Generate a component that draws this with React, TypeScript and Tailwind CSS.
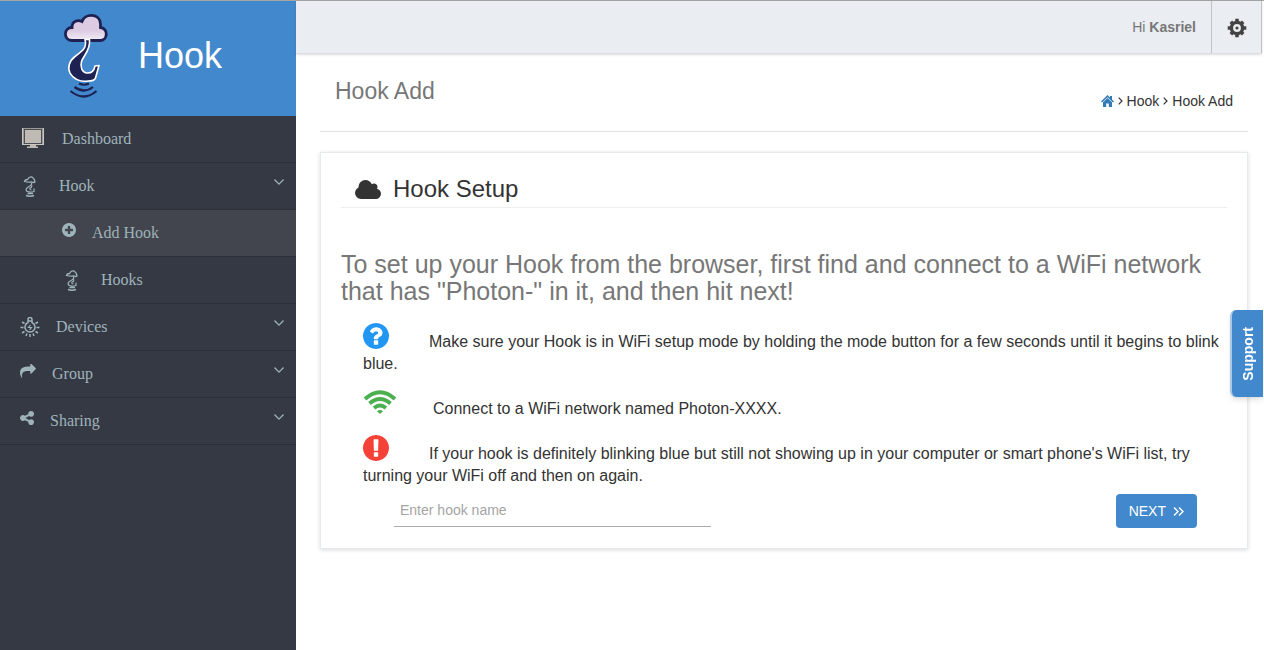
import type { ReactNode } from 'react';

const FA_ANGLE_DOWN = 'M1395 736q0 13-10 23l-466 466q-10 10-23 10t-23-10l-466-466q-10-10-10-23t10-23l50-50q10-10 23-10t23 10l393 393 393-393q10-10 23-10t23 10l50 50q10 10 10 23z';
const FA_PLUS_CIRCLE = 'M1344 960v-128q0-26-19-45t-45-19h-256v-256q0-26-19-45t-45-19h-128q-26 0-45 19t-19 45v256h-256q-26 0-45 19t-19 45v128q0 26 19 45t45 19h256v256q0 26 19 45t45 19h128q26 0 45-19t19-45v-256h256q26 0 45-19t19-45zm320-64q0 209-103 385.5t-279.5 279.5-385.5 103-385.5-103-279.5-279.5-103-385.5 103-385.5 279.5-279.5 385.5-103 385.5 103 279.5 279.5 103 385.5z';
const FA_SHARE = 'M1792 640q0 26-19 45l-512 512q-19 19-45 19t-45-19-19-45v-256h-224q-98 0-175.5 6t-154 21.5-133 42.5-105.5 69.5-80 101-48.5 138.5-17.5 181q0 55 5 123 0 6 2.5 23.5t2.5 26.5q0 15-8.5 25t-23.5 10q-16 0-28-17-7-9-13-22t-13.5-30-10.5-24q-127-285-127-451 0-199 53-333 162-403 875-403h224v-256q0-26 19-45t45-19 45 19l512 512q19 19 19 45z';
const FA_SHARE_ALT = 'M1344 1024q133 0 226.5 93.5t93.5 226.5-93.5 226.5-226.5 93.5-226.5-93.5-93.5-226.5q0-12 2-34l-360-180q-92 86-218 86-133 0-226.5-93.5t-93.5-226.5 93.5-226.5 226.5-93.5q126 0 218 86l360-180q-2-22-2-34 0-133 93.5-226.5t226.5-93.5 226.5 93.5 93.5 226.5-93.5 226.5-226.5 93.5q-126 0-218-86l-360 180q2 22 2 34t-2 34l360 180q92-86 218-86z';
const FA_CLOUD = 'M1984 1152q0 159-112.5 271.5t-271.5 112.5h-1088q-185 0-316.5-131.5t-131.5-316.5q0-132 71-241.5t187-163.5q-2-28-2-43 0-212 150-362t362-150q158 0 286.5 88t187.5 230q70-62 166-62 106 0 181 75t75 181q0 75-41 138 129 30 213 134.5t84 239.5z';
const FA_QUESTION = 'M1024 1376v-192q0-14-9-23t-23-9h-192q-14 0-23 9t-9 23v192q0 14 9 23t23 9h192q14 0 23-9t9-23zm256-672q0-88-55.5-163t-138.5-116-170-41q-243 0-371 213-15 24 8 42l132 100q7 6 19 6 16 0 25-12 53-68 86-92 34-24 86-24 48 0 85.5 26t37.5 59q0 38-20 61t-68 45q-63 28-115.5 86.5t-52.5 125.5v36q0 14 9 23t23 9h192q14 0 23-9t9-23q0-19 21.5-49.5t54.5-49.5q32-18 49-28.5t46-35 44.5-48 28-60.5 12.5-81zm384 192q0 209-103 385.5t-279.5 279.5-385.5 103-385.5-103-279.5-279.5-103-385.5 103-385.5 279.5-279.5 385.5-103 385.5 103 279.5 279.5 103 385.5z';
const FA_EXCLAMATION = 'M896 128q209 0 385.5 103t279.5 279.5 103 385.5-103 385.5-279.5 279.5-385.5 103-385.5-103-279.5-279.5-103-385.5 103-385.5 279.5-279.5 385.5-103zm128 1247v-190q0-14-9-23.5t-22-9.5h-192q-13 0-23 10t-10 23v190q0 13 10 23t23 10h192q13 0 22-9.5t9-23.5zm-2-344l18-621q0-12-10-18-10-8-24-8h-220q-14 0-24 8-10 6-10 18l17 621q0 10 10 17.5t24 7.5h185q14 0 23.5-7.5t10.5-17.5z';

function Icon({ d, className, box = '128 128 1536 1536' }: { d: string; className: string; box?: string }) {
  return (
    <svg viewBox={box} className={className} fill="currentColor" aria-hidden="true">
      <path d={d} />
    </svg>
  );
}

function Logo() {
  return (
    <svg viewBox="0 0 44 86" className="w-11 h-[86px]" fill="none" aria-hidden="true">
      <defs>
        <linearGradient id="cloud" x1="0" y1="0" x2="0" y2="1">
          <stop offset="0.6" stopColor="#dccbe2" />
          <stop offset="1" stopColor="#f3eef7" />
        </linearGradient>
      </defs>
      <path d="M8 27.500C-1 27-.5 14.500 8 14.500C8 8 14 6.500 18 8.500C21 0 36 0 36.500 11V14.500C45 16 43.500 27.500 36 27.500z" fill="url(#cloud)" stroke="#1d2253" strokeWidth="2.800" />
      <path d="M21 26.500C23 34 20 37 11 43.500C5 48 3.500 55 6 60C9 66 16 69 24 68C28 68 31 67 31.500 65L35 52.500L31 53C30 58 27 60.500 22.500 60C18 59 16 54 17.500 48.500C19 43 27 37 25.500 26.500z" fill="#1d2253" stroke="#fff" strokeWidth="1.600" strokeLinejoin="round" />
      <path d="M15 70.500q5 2.500 10 0M10.500 74q9.500 7 18.500 0M6.500 78q13.500 11 26 0" stroke="#1d2253" strokeWidth="2.200" />
    </svg>
  );
}

function HookIcon() {
  return (
    <svg viewBox="0 0 14 22" className="w-3.5 h-[22px]" fill="none" stroke="currentColor" aria-hidden="true">
      <path d="M1.500 6.500Q2 4.500 4.500 4.500Q6 1.500 9 2Q11.500 3.500 12 7Q11 8 9 7Q5 7.500 1.500 6.500z" strokeWidth="1.300" />
      <path d="M8.500 7.500Q9.500 10 6 11.500Q2 13.500 3.500 16Q7 18 11 16.500V13.500M9 10.500Q9 12.500 7 13Q6 14.500 8.500 15" strokeWidth="1.200" />
      <path d="M4.500 18.500h5.500M3 20.500q4 1.500 8 0" strokeWidth="1.500" />
    </svg>
  );
}

function BulbIcon() {
  return (
    <svg viewBox="0 0 20 20" className="size-5" fill="none" stroke="currentColor" aria-hidden="true">
      <path d="M8 5.500V2.500a2 2 0 0 1 4 0v3a5 5 0 1 1-4 0zM8 4h4" strokeWidth="1.500" />
      <path d="M10.500 8L8.500 10.500h3L9.500 13" strokeWidth="1.200" />
      <path d="M.5 10.500h3M16.500 10.500h3M2 5l2.500 1.500M18 5l-2.500 1.500M2 16l2.500-1.500M18 16l-2.500-1.500M6 19l1-2.500M14 19l-1-2.500M10 17v3" strokeWidth="1.500" />
    </svg>
  );
}

function MonitorIcon() {
  return (
    <svg viewBox="0 0 22 20" className="w-[22px] h-5 mb-0.5" aria-hidden="true">
      <rect width="22" height="17" fill="#9c9894" />
      <path d="M0 16.500h22M.5 0v17M21.500 0v17" stroke="#cbc6c1" />
      <rect x="2" y="1" width="18" height="15" fill="#4d4e55" />
      <rect x="3" y="2" width="16" height="13" fill="#c0bab4" />
      <path d="M8 17h6v1.500h2V20H5v-1.500h3z" fill="#c0bab4" />
    </svg>
  );
}

function GearIcon() {
  return (
    <svg viewBox="0 0 20 20" className="size-5" fill="none" stroke="currentColor" aria-hidden="true">
      <circle cx="10" cy="10" r="5.600" strokeWidth="3.400" />
      <path d="M10 .7v3M10 16.300v3M.7 10h3M16.300 10h3M3.800 3.800l2 2M14.200 14.200l2 2M3.800 16.200l2-2M14.200 5.800l2-2" strokeWidth="3.600" />
      <circle cx="10" cy="10" r="1.600" fill="currentColor" stroke="none" />
    </svg>
  );
}

function HomeIcon() {
  return (
    <svg viewBox="0 0 13 12" className="w-[13px] h-3" fill="currentColor" aria-hidden="true">
      <path d="M6.500 0L9 2.500V1h2v3.500L13 6.500l-1 1L6.500 2.200L1 7.500l-1-1z" />
      <path d="M6.500 3L11 7.300V12H7.800V8.500H5.200V12H2V7.300z" />
    </svg>
  );
}

function CrumbArrow() {
  return (
    <svg viewBox="0 0 5 8" className="w-[5px] h-2" fill="none" stroke="currentColor" strokeWidth="1.200" aria-hidden="true">
      <path d="M.7.7L4 4L.7 7.300" />
    </svg>
  );
}

function WifiIcon() {
  return (
    <svg viewBox="0 0 34 24" className="w-[34px] h-6" fill="none" stroke="#4caf50" strokeWidth="4" aria-hidden="true">
      <path d="M2 9Q17-4.500 32 9" />
      <path d="M6.500 13.500Q17 4.500 27.500 13.500" />
      <path d="M11 18Q17 13 23 18" />
      <path d="M14 21.200Q17 19 20 21.200L17 24z" fill="#4caf50" stroke="none" />
    </svg>
  );
}

type Item = { label: string; icon: ReactNode; pad: string; more?: boolean; active?: boolean };

const MENU: Item[] = [
  { label: 'Dashboard', icon: <MonitorIcon />, pad: 'pl-[22px] gap-[18px]' },
  { label: 'Hook', icon: <HookIcon />, pad: 'pl-[23px] gap-[22px]', more: true },
  { label: 'Add Hook', icon: <Icon d={FA_PLUS_CIRCLE} className="size-3.5 mb-1.5" />, pad: 'pl-[62px] gap-4', active: true },
  { label: 'Hooks', icon: <HookIcon />, pad: 'pl-[65px] gap-[22px]' },
  { label: 'Devices', icon: <BulbIcon />, pad: 'pl-5 gap-4', more: true },
  { label: 'Group', icon: <Icon d={FA_SHARE} box="0 128 1792 1536" className="w-4 h-3.5 mb-1.5" />, pad: 'pl-5 gap-4', more: true },
  { label: 'Sharing', icon: <Icon d={FA_SHARE_ALT} className="size-3.5 mb-1.5" />, pad: 'pl-5 gap-4', more: true },
];

export default function App() {
  return (
    <div className="flex min-h-screen bg-white border-t border-[#a5a5a5] font-['Liberation_Sans',Arial,sans-serif] text-[#333]">
      <aside className="w-[296px] shrink-0 bg-[#353944]">
        <a href="#" className="flex items-start h-[115px] pt-3 pl-16 gap-[30px] bg-[#4288cc] text-white">
          <Logo />
          <span className="mt-[21px] text-[36px] leading-[44px]">Hook</span>
        </a>
        <nav className="font-['Liberation_Serif',serif] text-base text-[#9fb3ba]">
          {MENU.map((item) => (
            <a
              key={item.label}
              href="#"
              className={`flex items-center h-[47px] pr-3 border-b border-[#2c2f39] ${item.pad} ${item.active ? 'bg-[#42454e]' : ''}`}
            >
              {item.icon}
              <span>{item.label}</span>
              {item.more && <Icon d={FA_ANGLE_DOWN} box="384 640 1024 600" className="w-2.5 h-1.5 ml-auto mb-2" />}
            </a>
          ))}
        </nav>
      </aside>

      <div className="flex-1 min-w-0">
        <header className="flex justify-end h-[53px] bg-[#eaedf1] border-b border-[#dcdee1] shadow-sm mr-0.5">
          <p className="px-[15px] text-sm leading-[52px] text-[#777]">
            Hi <strong>Kasriel</strong>
          </p>
          <button aria-label="Settings" className="flex items-center justify-center w-[51px] pt-0.5 border-x border-[#bfc1c5] text-[#444]">
            <GearIcon />
          </button>
        </header>

        <main className="pl-6 pr-4">
          <div className="flex justify-between h-[78px] px-[15px] border-b border-[#e2e2e2]">
            <h1 className="pt-5 text-[23px] leading-[34px] text-[#777]">Hook Add</h1>
            <nav aria-label="Breadcrumb" className="flex items-center gap-1 h-5 mt-[37px] text-sm">
              <a href="#" aria-label="Home" className="text-[#337ab7]"><HomeIcon /></a>
              <CrumbArrow />
              <a href="#">Hook</a>
              <CrumbArrow />
              <span>Hook Add</span>
            </nav>
          </div>

          <section className="mt-5 px-5 pb-5 border border-[#e7eaed] shadow-[0_1px_4px_rgba(0,0,0,0.15)]">
            <h2 className="flex items-center gap-3 h-[55px] pt-[18px] pl-3.5 border-b border-[#eee] text-2xl">
              <Icon d={FA_CLOUD} box="64 128 1920 1408" className="w-[26px] h-[19px]" />
              Hook Setup
            </h2>
            <p className="mt-[43px] text-[25px] leading-[27px] text-[#777]">
              To set up your Hook from the browser, first find and connect to a WiFi network that has "Photon-" in it, and then hit next!
            </p>
            <ul className="pl-[22px] text-base leading-[22px]">
              <li className="mt-[18px]">
                <Icon d={FA_QUESTION} className="inline-block align-[-2px] size-[26px] mr-10 text-[#2196f3]" />
                Make sure your Hook is in WiFi setup mode by holding the mode button for a few seconds until it begins to blink blue.
              </li>
              <li className="flex items-center gap-9 mt-[9px]">
                <WifiIcon />
                <span className="pt-3.5">Connect to a WiFi network named Photon-XXXX.</span>
              </li>
              <li className="mt-[15px]">
                <Icon d={FA_EXCLAMATION} className="inline-block align-[-2px] size-[26px] mr-10 text-[#f44336]" />
                If your hook is definitely blinking blue but still not showing up in your computer or smart phone's WiFi list, try turning your WiFi off and then on again.
              </li>
            </ul>
            <form className="flex items-start justify-between mt-[7px] pl-[53px] pr-[30px]">
              <input
                type="text"
                aria-label="Hook name"
                placeholder="Enter hook name"
                className="w-[317px] h-[33px] px-1.5 border-b border-[#aaa] text-sm outline-none placeholder:text-[#a5a5a5]"
              />
              <button type="button" className="flex items-center gap-[7px] h-[34px] px-[13px] rounded bg-[#4288cc] text-sm text-white">
                NEXT
                <svg viewBox="0 0 11 9" className="w-[11px] h-[9px]" fill="none" stroke="currentColor" strokeWidth="1.400" aria-hidden="true">
                  <path d="M1 .5l4 4-4 4M6 .5l4 4-4 4" />
                </svg>
              </button>
            </form>
          </section>
        </main>
      </div>

      <button className="fixed right-px top-[310px] flex items-center justify-center w-[33px] h-[87px] rounded-l-md border-l-2 border-[#a9c8e4] bg-[#4288cc] shadow-md text-sm font-bold text-white">
        <span className="[writing-mode:vertical-rl] rotate-180">Support</span>
      </button>
    </div>
  );
}
